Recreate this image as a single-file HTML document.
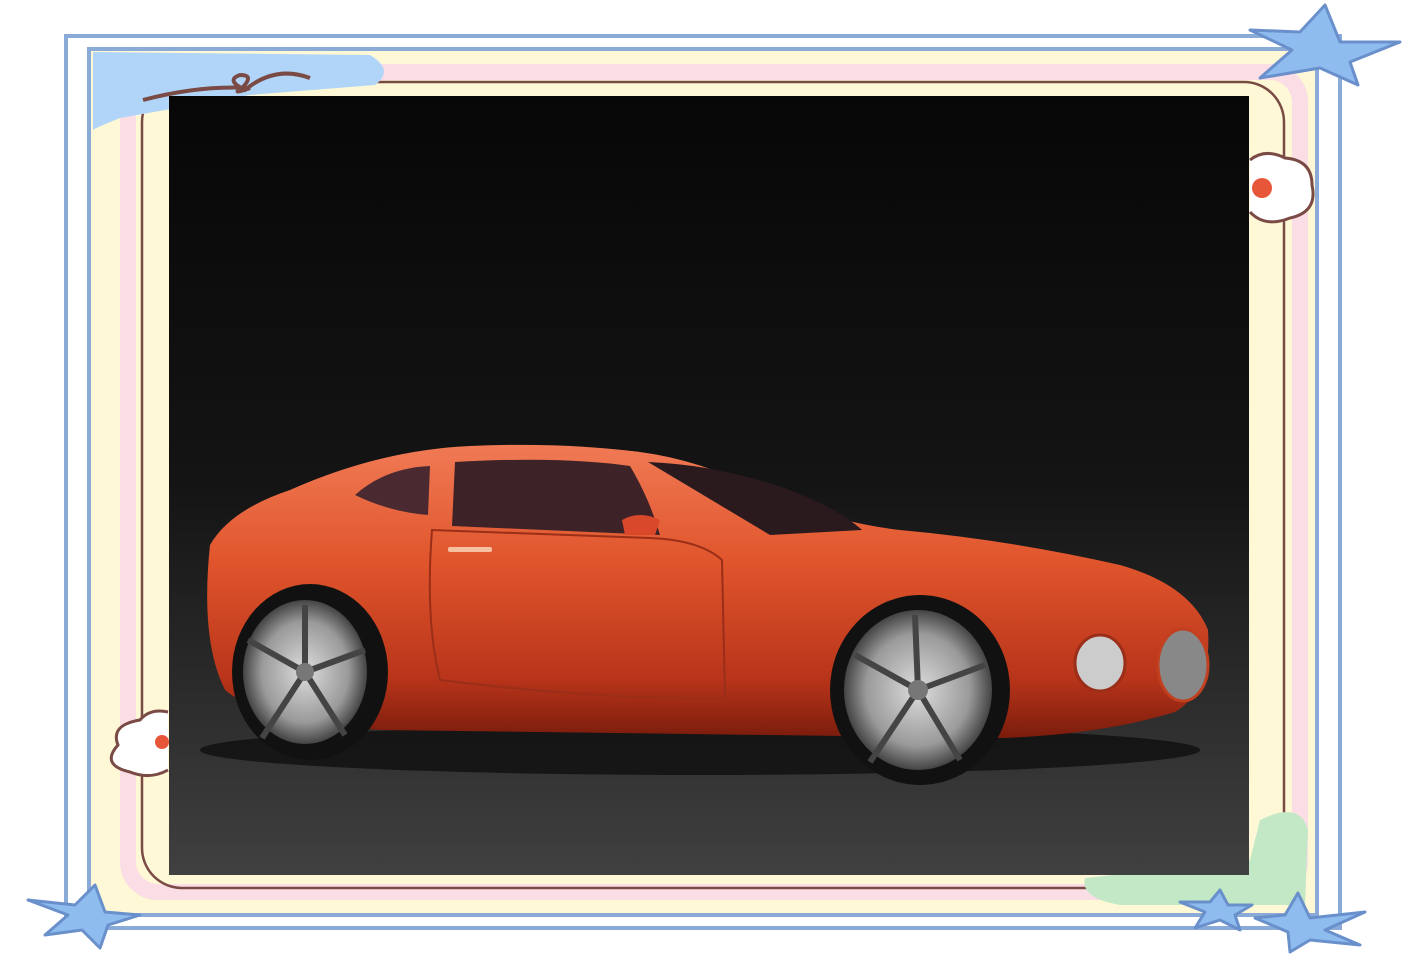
<!DOCTYPE html>
<html><head><style>
html,body{margin:0;padding:0;background:#fff;width:1408px;height:964px;overflow:hidden}
</style></head><body>
<svg width="1408" height="964" viewBox="0 0 1408 964" style="position:absolute;left:0;top:0">
<defs>
<linearGradient id="bg" x1="0" y1="0" x2="0" y2="1">
<stop offset="0" stop-color="#070707"/><stop offset="0.5" stop-color="#141414"/><stop offset="1" stop-color="#404040"/></linearGradient>
<linearGradient id="body" x1="0" y1="0" x2="0" y2="1">
<stop offset="0" stop-color="#f07a55"/><stop offset="0.4" stop-color="#e0552c"/><stop offset="0.8" stop-color="#b8341a"/><stop offset="1" stop-color="#7a1c0c"/></linearGradient>
<radialGradient id="wh"><stop offset="0" stop-color="#ddd"/><stop offset="0.7" stop-color="#9a9a9a"/><stop offset="1" stop-color="#444"/></radialGradient>
</defs>
<!-- frame -->
<rect x="66" y="36" width="1274" height="892" fill="#fff" stroke="#8aaad8" stroke-width="4"/>
<rect x="89" y="49" width="1228" height="866" fill="#fef8d6" stroke="#8aaad8" stroke-width="4"/>
<rect x="128" y="72" width="1172" height="820" fill="none" stroke="#fbdde6" stroke-width="16" rx="30"/>
<rect x="142" y="82" width="1142" height="806" fill="none" stroke="#7a4a44" stroke-width="2.5" rx="40"/>
<path d="M93 52 L370 55 Q395 70 375 85 L250 95 L120 118 Q95 128 93 130 Z" fill="#b1d5f8"/>
<path d="M143 100 Q200 85 250 88 Q230 95 242 88 Q255 75 240 75 Q225 80 245 90 Q275 65 310 78" fill="none" stroke="#7a4a44" stroke-width="4"/>
<path d="M1085 878 L1250 860 L1260 820 Q1300 800 1308 830 L1305 905 L1120 905 Q1080 898 1085 878Z" fill="#c3e8c6"/>
<g fill="#fff" stroke="#7a4a44" stroke-width="3">
<path d="M1250 160 Q1265 148 1285 158 Q1312 160 1312 185 Q1318 212 1290 218 Q1265 228 1250 212"/>
<path d="M168 712 Q150 708 140 720 Q110 725 118 745 Q100 765 130 772 Q150 780 168 770"/>
</g>
<circle cx="1262" cy="188" r="10" fill="#e8563a"/>
<circle cx="162" cy="742" r="7" fill="#e8563a"/>
<!-- stars -->
<g fill="#8fbcef" stroke="#6a90cc" stroke-width="3" stroke-linejoin="round">
<path d="M1325 5 L1340 42 L1400 42 L1350 62 L1358 85 L1320 68 L1260 78 L1292 50 L1250 30 L1300 32 Z"/>
<path d="M95 885 L105 912 L140 915 L108 925 L100 948 L82 930 L45 935 L68 915 L28 900 L75 905 Z"/>
<path d="M1220 890 L1228 905 L1252 905 L1235 915 L1240 930 L1220 920 L1195 928 L1205 912 L1180 902 L1210 902Z"/>
<path d="M1298 893 L1310 918 L1365 912 L1325 930 L1360 945 L1310 940 L1290 952 L1288 932 L1255 918 L1285 915Z"/>
</g>
<!-- photo -->
<rect x="169" y="96" width="1080" height="779" fill="url(#bg)"/>
<ellipse cx="700" cy="750" rx="500" ry="25" fill="#0a0a0a" opacity="0.7"/>
<!-- car body -->
<path d="M210 545 Q230 510 290 490 Q380 450 470 446 Q560 442 640 452 Q700 460 760 490 Q830 522 900 530 Q1010 540 1120 565 Q1190 585 1208 630 Q1212 690 1175 712 Q1100 735 1000 738 L380 730 Q260 720 225 690 Q200 640 210 545Z" fill="url(#body)"/>
<path d="M355 495 Q385 468 430 466 L428 515 Q390 512 355 495Z" fill="#4a2a30"/>
<path d="M455 462 Q560 456 630 466 Q650 500 660 535 L452 526 Z" fill="#3d2228"/>
<path d="M648 462 Q720 465 790 490 Q840 510 862 530 L770 535 Z" fill="#2a1a1e"/>
<path d="M432 530 Q425 620 440 680 Q600 700 725 698 L722 560 Q700 540 650 538 Z" fill="none" stroke="#9a2e18" stroke-width="2"/>
<rect x="448" y="547" width="44" height="5" rx="2" fill="#f5c0a0"/>
<path d="M622 520 Q640 510 660 520 L655 535 L625 535Z" fill="#d9482a"/>
<ellipse cx="1100" cy="663" rx="25" ry="28" fill="#ccc" stroke="#9a2e18" stroke-width="3"/>
<ellipse cx="1183" cy="665" rx="25" ry="36" fill="#888" stroke="#c04020" stroke-width="3"/>
<!-- wheels -->
<ellipse cx="310" cy="672" rx="78" ry="88" fill="#111"/>
<ellipse cx="305" cy="672" rx="62" ry="72" fill="url(#wh)"/>
<ellipse cx="920" cy="690" rx="90" ry="95" fill="#111"/>
<ellipse cx="918" cy="690" rx="74" ry="80" fill="url(#wh)"/>
<g stroke="#444" stroke-width="6">
<path d="M305 672 L305 605 M305 672 L365 650 M305 672 L345 735 M305 672 L262 738 M305 672 L248 640"/>
<path d="M918 690 L915 615 M918 690 L985 665 M918 690 L960 760 M918 690 L870 762 M918 690 L855 655"/>
</g>
<circle cx="305" cy="672" r="9" fill="#777"/><circle cx="918" cy="690" r="10" fill="#777"/>
</svg>
</body></html>
